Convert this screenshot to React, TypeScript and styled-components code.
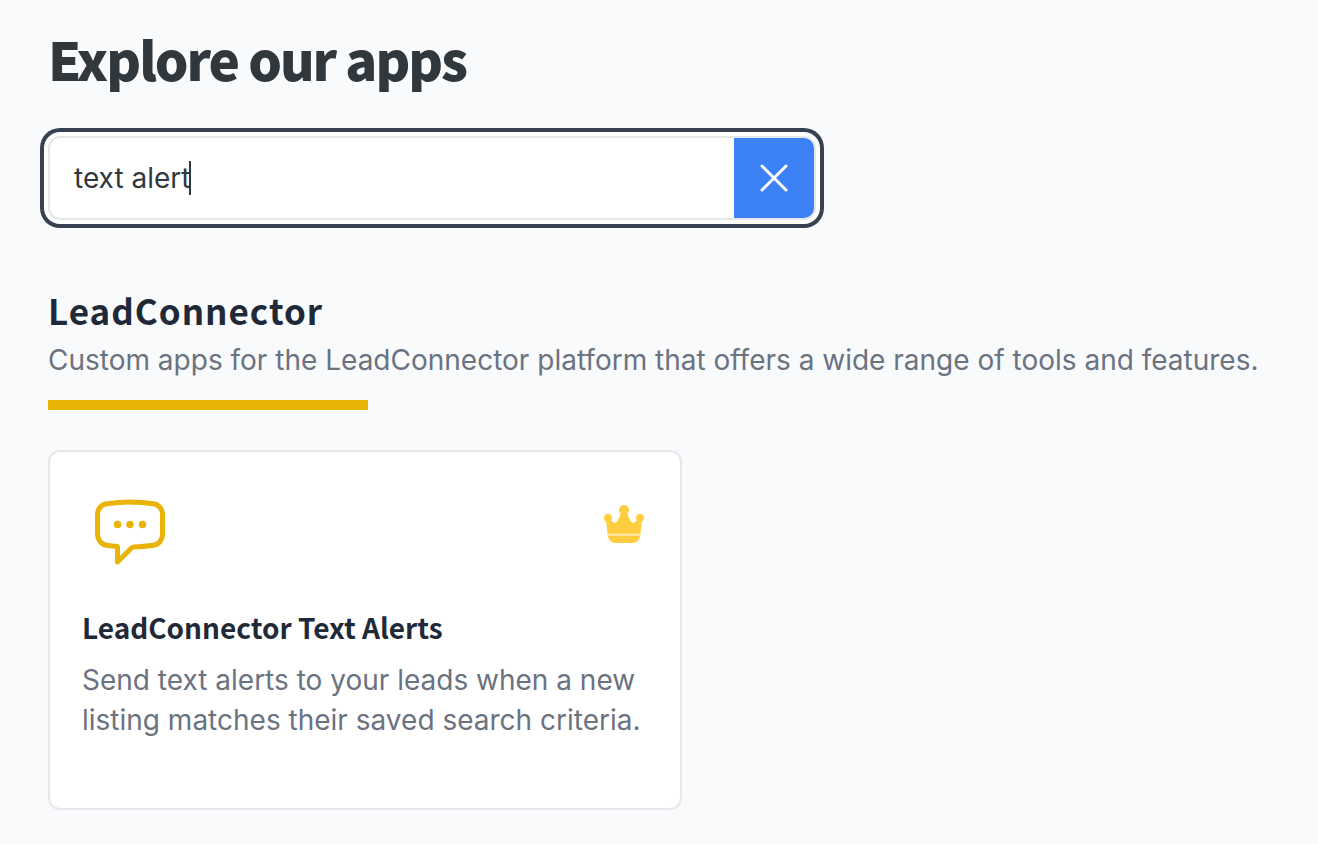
import React, { useState } from "react";
import styled, { createGlobalStyle } from "styled-components";

const GlobalStyle = createGlobalStyle`
  *, *::before, *::after { box-sizing: border-box; }
  body {
    margin: 0;
    background: #f9fafc;
    color: #30383e;
    font-family: Inter, "Liberation Sans", sans-serif;
    font-size: 28px;
    line-height: 40px;
  }
  h1, h2, h3, p { margin: 0; }
`;

const display = `"Noto Sans CJK SC", "Noto Sans", sans-serif`;

const Page = styled.main`
  padding: 28px 48px;
`;

const PageTitle = styled.h1`
  font-family: ${display};
  font-size: 53px;
  font-weight: 900;
  line-height: 60px;
  letter-spacing: -2px;
`;

const SearchBox = styled.form`
  display: flex;
  max-width: 768px;
  height: 84px;
  margin-top: 48px;
  border: 2px solid #e5e7eb;
  border-radius: 12px;
  background: #ffffff;
  box-shadow: 0 0 0 4px #ffffff, 0 0 0 8px #374151;
`;

const SearchField = styled.label`
  display: flex;
  flex: 1;
  align-items: center;
  min-width: 0;
  padding-left: 24px;
  cursor: text;
`;

const SearchInput = styled.input`
  field-sizing: content;
  min-width: 0;
  padding: 0;
  border: 0;
  outline: 0;
  background: transparent;
  color: inherit;
  font: inherit;
  caret-color: transparent;
`;

const Caret = styled.span`
  flex: none;
  width: 2px;
  height: 34px;
  margin-left: -1px;
  background: #30383e;
`;

const ClearButton = styled.button`
  display: flex;
  align-items: center;
  justify-content: center;
  width: 80px;
  padding: 0;
  border: 0;
  border-radius: 0 10px 10px 0;
  background: #3c82f6;
  color: #ffffff;
  cursor: pointer;
`;

const Section = styled.section`
  margin-top: 66px;
`;

const SectionTitle = styled.h2`
  margin-bottom: 6px;
  color: #1f2937;
  font-family: ${display};
  font-size: 35px;
  font-weight: 600;
  line-height: 48px;
  letter-spacing: 1px;
`;

const Muted = styled.p`
  color: #6b7280;
`;

const Rule = styled.div`
  width: 320px;
  max-width: 100%;
  height: 10px;
  margin: 20px 0 40px;
  background: #eab308;
`;

const Card = styled.article`
  max-width: 634px;
  padding: 32px 32px 68px;
  border: 2px solid #e5e7eb;
  border-radius: 12px;
  background: #ffffff;
`;

const CardTop = styled.div`
  display: flex;
  justify-content: space-between;
  padding: 8px 0 8px 8px;
`;

const PremiumBadge = styled.span`
  display: flex;
  margin-top: 8px;
`;

const CardTitle = styled.h3`
  margin: 27px 0 13px;
  color: #1f2937;
  font-family: ${display};
  font-size: 28px;
  font-weight: 600;
  line-height: 40px;
`;

function CloseIcon() {
  return (
    <svg width="48" height="48" viewBox="0 0 24 24" fill="none" stroke="currentColor" strokeWidth="1.5" strokeLinecap="round" aria-hidden="true">
      <path d="M6 18L18 6M6 6l12 12" />
    </svg>
  );
}

function ChatIcon() {
  return (
    <svg width="80" height="80" viewBox="0 0 24 24" fill="none" stroke="#eab308" strokeWidth="1.5" strokeLinecap="round" strokeLinejoin="round" aria-hidden="true">
      <path d="M8.625 9.75a.375.375 0 11-.75 0 .375.375 0 01.75 0zm0 0H8.25m4.125 0a.375.375 0 11-.75 0 .375.375 0 01.75 0zm0 0H12m4.125 0a.375.375 0 11-.75 0 .375.375 0 01.75 0zm0 0h-.375m-13.5 3.01c0 1.6 1.123 2.994 2.707 3.227 1.087.16 2.185.283 3.293.369V21l4.184-4.183a1.14 1.14 0 01.778-.332 48.294 48.294 0 005.83-.498c1.585-.233 2.708-1.626 2.708-3.228V6.741c0-1.602-1.123-2.995-2.707-3.228A48.394 48.394 0 0012 3c-2.392 0-4.744.175-7.043.513C3.373 3.746 2.25 5.14 2.25 6.741v6.018z" />
    </svg>
  );
}

function CrownIcon() {
  return (
    <svg width="48" height="48" viewBox="0 0 48 48" role="img" aria-label="Premium">
      <g fill="#ffce3f">
        <circle cx="8" cy="18" r="4" />
        <circle cx="24" cy="10" r="5" />
        <circle cx="40" cy="18" r="4" />
        <path d="M6 20L10 19.500Q13.500 23 15.500 23Q17.500 22 21 13H27Q30.500 22 32.500 23Q34.500 23 38 19.500L42 20L40.400 34Q39.500 43 32.500 43H15.500Q8.500 43 7.600 34Z" />
      </g>
      <path d="M7.500 33.800H40.500V35.800H7.500Z" fill="#ffe9ae" />
    </svg>
  );
}

export default function App() {
  const [query, setQuery] = useState("text alert");
  return (
    <>
      <GlobalStyle />
      <Page>
        <PageTitle>Explore our apps</PageTitle>
        <SearchBox role="search" onSubmit={(e: React.FormEvent) => e.preventDefault()}>
          <SearchField>
            <SearchInput
              type="text"
              aria-label="Search apps"
              value={query}
              onChange={(e: React.ChangeEvent<HTMLInputElement>) => setQuery(e.target.value)}
            />
            <Caret aria-hidden="true" />
          </SearchField>
          <ClearButton type="button" aria-label="Clear search" onClick={() => setQuery("")}>
            <CloseIcon />
          </ClearButton>
        </SearchBox>
        <Section>
          <SectionTitle>LeadConnector</SectionTitle>
          <Muted>Custom apps for the LeadConnector platform that offers a wide range of tools and features.</Muted>
          <Rule />
          <Card>
            <CardTop>
              <ChatIcon />
              <PremiumBadge>
                <CrownIcon />
              </PremiumBadge>
            </CardTop>
            <CardTitle>LeadConnector Text Alerts</CardTitle>
            <Muted>Send text alerts to your leads when a new listing matches their saved search criteria.</Muted>
          </Card>
        </Section>
      </Page>
    </>
  );
}
